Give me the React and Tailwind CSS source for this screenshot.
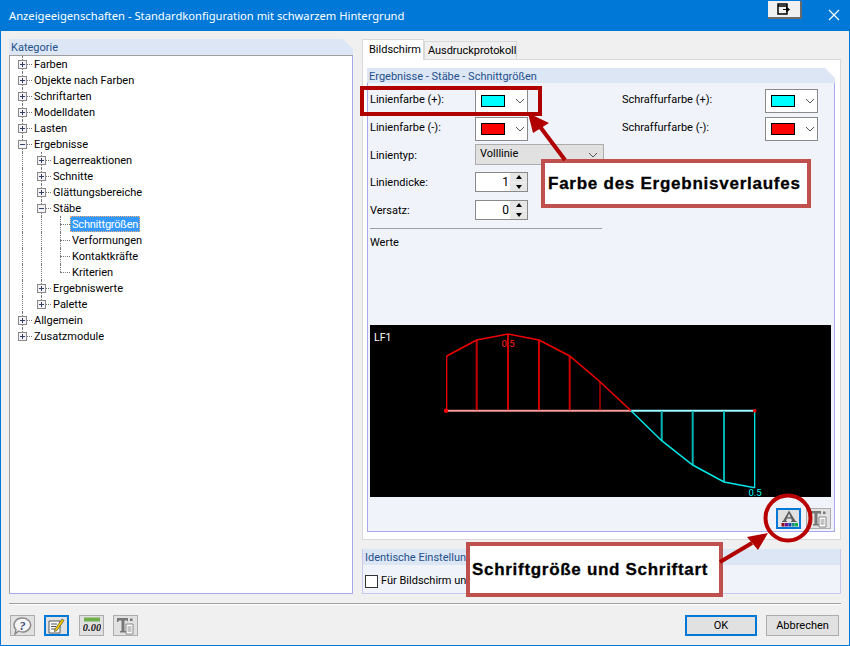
import React from "react";

const TREE = [
  { label: "Farben", level: 0, kind: "plus" },
  { label: "Objekte nach Farben", level: 0, kind: "plus" },
  { label: "Schriftarten", level: 0, kind: "plus" },
  { label: "Modelldaten", level: 0, kind: "plus" },
  { label: "Lasten", level: 0, kind: "plus" },
  { label: "Ergebnisse", level: 0, kind: "minus" },
  { label: "Lagerreaktionen", level: 1, kind: "plus" },
  { label: "Schnitte", level: 1, kind: "plus" },
  { label: "Glättungsbereiche", level: 1, kind: "plus" },
  { label: "Stäbe", level: 1, kind: "minus" },
  { label: "Schnittgrößen", level: 2, kind: "leaf", selected: true },
  { label: "Verformungen", level: 2, kind: "leaf" },
  { label: "Kontaktkräfte", level: 2, kind: "leaf" },
  { label: "Kriterien", level: 2, kind: "leaf", last: true },
  { label: "Ergebniswerte", level: 1, kind: "plus" },
  { label: "Palette", level: 1, kind: "plus", lastInLevel: true },
  { label: "Allgemein", level: 0, kind: "plus" },
  { label: "Zusatzmodule", level: 0, kind: "plus", lastInLevel: true },
];

function Guide({ half }) {
  return (
    <span
      className={`absolute left-[9px] top-0 w-0 border-l border-dotted border-[#777] ${
        half ? "h-2" : "h-4"
      }`}
    />
  );
}

function TreeRow({ item }) {
  const { level, kind } = item;
  return (
    <div className="flex h-4 items-center text-[11px] leading-4 text-black">
      <div className="relative h-4 w-[19px] shrink-0">
        <Guide half={level === 0 && item.lastInLevel} />
        {level === 0 && <Expander kind={kind} />}
      </div>
      {level >= 1 && (
        <div className="relative h-4 w-[19px] shrink-0">
          <Guide half={level === 1 && item.lastInLevel} />
          {level === 1 && <Expander kind={kind} />}
        </div>
      )}
      {level === 2 && (
        <div className="relative h-4 w-[19px] shrink-0">
          <Guide half={item.last} />
          <span className="absolute left-[9px] top-2 w-[10px] border-t border-dotted border-[#777]" />
        </div>
      )}
      {item.selected ? (
        <span className="h-4 whitespace-nowrap border border-dotted border-[#ffb070] bg-[#3399ff] px-[1px] leading-[15px] tracking-[-0.2px] text-white">
          {item.label}
        </span>
      ) : (
        <span className="pl-[2px] pt-[1px]">{item.label}</span>
      )}
    </div>
  );
}

function Expander({ kind }) {
  return (
    <>
      <span className="absolute left-[14px] top-2 w-[5px] border-t border-dotted border-[#777]" />
      <span className="absolute left-[5px] top-[4px] flex h-[9px] w-[9px] items-center justify-center border border-[#8a8a8a] bg-[#f4f4f4]">
        <span className="absolute h-px w-[5px] bg-[#33406e]" />
        {kind === "plus" && <span className="absolute h-[5px] w-px bg-[#33406e]" />}
      </span>
    </>
  );
}

function ColorCombo({ color }) {
  return (
    <div className="flex h-6 w-[53px] items-center border border-[#8a8a8a] bg-white pl-[5px]">
      <span className={`h-3 w-6 border border-black ${color}`} />
      <svg width="10" height="6" viewBox="0 0 10 6" className="ml-[10px]">
        <path d="M1 1l4 4 4-4" fill="none" stroke="#555" strokeWidth="1" />
      </svg>
    </div>
  );
}

function Spinner({ value }) {
  return (
    <div className="flex h-5 w-[53px] border border-[#8a8a8a] bg-white">
      <span className="flex-1 pr-[1px] text-right text-[12px] leading-[18px]">{value}</span>
      <div className="flex w-[17px] flex-col gap-px bg-[#f0f0f0]">
        <span className="flex flex-1 items-center justify-center bg-[#e6e6e6]">
          <span className="h-0 w-0 border-x-[3px] border-b-[4px] border-x-transparent border-b-black" />
        </span>
        <span className="flex flex-1 items-center justify-center bg-[#e6e6e6]">
          <span className="h-0 w-0 border-x-[3px] border-t-[4px] border-x-transparent border-t-black" />
        </span>
      </div>
    </div>
  );
}

function SectionHeader({ tall, children }) {
  return (
    <div
      className={`bg-[#dce6f4] pl-[2px] pt-[1px] text-[11px] text-[#24508c] [clip-path:polygon(0_0,calc(100%-10px)_0,100%_10px,100%_100%,0_100%)] ${
        tall ? "h-4 leading-4" : "h-[15px] leading-[15px]"
      }`}
    >
      {children}
    </div>
  );
}

function ToolButton({ active, children }) {
  return (
    <button
      className={`flex h-[21px] w-[25px] items-center justify-center bg-[#e1e1e1] ${
        active ? "border-2 border-[#0078d7]" : "border border-[#adadad]"
      }`}
    >
      {children}
    </button>
  );
}

function Diagram() {
  const red = [[76.7, 31], [106.7, 15], [138, 9], [169, 15], [199.7, 31], [230, 56.7], [261, 85.7]];
  const cyan = [[261, 85.7], [291.7, 115.7], [322.7, 140], [354, 157], [384.7, 162.7]];
  return (
    <svg width="461" height="172" viewBox="0 0 461 172" className="block bg-black">
      <text x="4" y="16" fill="#fff" fontSize="10.5" fontFamily="Roboto, sans-serif">LF1</text>
      <line x1="76" y1="85.7" x2="261" y2="85.7" stroke="#ff9a9a" strokeWidth="2" />
      <line x1="261" y1="85.7" x2="385" y2="85.7" stroke="#9affff" strokeWidth="2" />
      {red.slice(1, 5).map(([x, y]) => (
        <line key={x} x1={x} y1={y} x2={x} y2="85" stroke="#cc0000" strokeWidth="2" />
      ))}
      <line x1="230" y1="57" x2="230" y2="85" stroke="#e00000" strokeWidth="1.2" />
      <line x1="76.7" y1="31" x2="76.7" y2="85" stroke="#ff0000" strokeWidth="1.2" />
      {cyan.slice(1, 4).map(([x, y]) => (
        <line key={x} x1={x} y1="86" x2={x} y2={y} stroke="#00b4b4" strokeWidth="2" />
      ))}
      <line x1="384.7" y1="86" x2="384.7" y2="163" stroke="#00ffff" strokeWidth="1.2" />
      <polyline points={red.map((p) => p.join(",")).join(" ")} fill="none" stroke="#f00000" strokeWidth="1.5" />
      <polyline points={cyan.map((p) => p.join(",")).join(" ")} fill="none" stroke="#00e6e6" strokeWidth="1.5" />
      <circle cx="76" cy="85.7" r="2.2" fill="#ff0000" />
      <circle cx="384.7" cy="85.7" r="1.8" fill="#ff0000" />
      <text x="138" y="22" textAnchor="middle" fill="#ff2020" fontSize="9.5" fontFamily="Roboto, sans-serif">0.5</text>
      <text x="385" y="171" textAnchor="middle" fill="#00ffff" fontSize="9.5" fontFamily="Roboto, sans-serif">0.5</text>
    </svg>
  );
}

function FontColorIcon() {
  return (
    <svg width="20" height="17" viewBox="0 0 20 17">
      <path d="M10 0.5L4 11H3v1h5v-1H7l.8-2.4h4.4L13 11h-1v1h5.5v-1h-1L10 0.5zM8.4 7.2L10 3.6l1.6 3.6H8.4z" fill="#5f5f5f" />
      <rect x="2.5" y="13" width="3" height="3.5" fill="#8a1020" />
      <rect x="5.9" y="13" width="3" height="3.5" fill="#6a10a0" />
      <rect x="9.3" y="13" width="3" height="3.5" fill="#2040b0" />
      <rect x="12.7" y="13" width="3" height="3.5" fill="#109080" />
      <rect x="16" y="13" width="3" height="3.5" fill="#10b050" />
    </svg>
  );
}

function FontDocIcon() {
  return (
    <svg width="20" height="18" viewBox="0 0 20 18">
      <path d="M1 1h11v4l-1-1.5H8.5V14H10v1.5H4V14h1.5V3.5H3L2 5H1z" fill="#777" />
      <path d="M10 7h7v10h-7z" fill="#fff" stroke="#888" />
      <path d="M11.5 10h4M11.5 12h4M11.5 14h4" stroke="#888" />
      <rect x="14" y="1.5" width="2.5" height="2.5" fill="#777" />
    </svg>
  );
}

function Annotations() {
  return (
    <svg width="850" height="646" viewBox="0 0 850 646" className="pointer-events-none absolute -left-px -top-px">
      <line x1="565" y1="160" x2="538" y2="124" stroke="#b00000" strokeWidth="4" />
      <polygon points="528,113 549,123 533,133" fill="#b00000" />
      <line x1="720" y1="562" x2="752" y2="543" stroke="#b00000" strokeWidth="4" />
      <polygon points="768,533 747,537 758,550" fill="#b00000" />
      <circle cx="788" cy="518" r="22.5" fill="none" stroke="#b80000" strokeWidth="4" />
    </svg>
  );
}

export default function App() {
  return (
    <div className="relative flex h-[646px] w-[850px] flex-col overflow-hidden border border-[#0078d7] bg-[#f0f0f0] font-['Roboto',sans-serif] text-[11px] text-black">
      <div className="flex h-[30px] shrink-0 items-start bg-[#0078d7] pl-2 text-white">
        <span className="pt-[7px] font-['Noto_Sans',sans-serif] text-[11.2px] leading-4">
          Anzeigeeigenschaften - Standardkonfiguration mit schwarzem Hintergrund
        </span>
        <button className="ml-auto flex h-[18px] w-[34px] items-center justify-center border-b-2 border-r-2 border-[#6a6a6a] bg-[#f0f0f0]">
          <svg width="14" height="12" viewBox="0 0 14 12">
            <path d="M1 1h9v10H1zM1 3h9" fill="none" stroke="#000" strokeWidth="1.5" />
            <path d="M6 6.5h5M9.5 4.5l3 2-3 2z" stroke="#000" fill="#000" strokeWidth="1" />
          </svg>
        </button>
        <div className="ml-[26px] mr-[9px] pt-2">
          <svg width="12" height="12" viewBox="0 0 12 12">
            <path d="M1 1l10 10M11 1L1 11" stroke="#fff" strokeWidth="1.2" />
          </svg>
        </div>
      </div>

      <div className="flex h-[563px] shrink-0 gap-[9px] pl-2 pt-2">
        <div className="flex h-[555px] w-[344px] flex-col">
          <SectionHeader tall>Kategorie</SectionHeader>
          <div className="flex-1 border border-b-[#a8a8f0] border-l-[#a0a0a0] border-r-[#a8a8f0] border-t-[#a0a0a0] bg-white pl-[3px]">
            {TREE.map((item) => (
              <TreeRow key={item.label} item={item} />
            ))}
          </div>
        </div>

        <div className="flex h-[555px] w-[479px] flex-col">
          <div className="flex h-5 items-end">
            <div className="relative z-10 -mb-px h-[21px] w-[62px] border border-b-0 border-[#d9d9d9] bg-white pl-[6px] pt-[2px] leading-4">
              Bildschirm
            </div>
            <div className="h-[18px] w-[93px] border border-b-0 border-[#d9d9d9] bg-[#f0f0f0] pl-[3px] pt-[1px] leading-4 tracking-[-0.05px]">
              Ausdruckprotokoll
            </div>
          </div>
          <div className="h-[481px] border border-[#d9d9d9] bg-white px-1 pb-[7px] pt-2">
            <div className="flex h-[464px] w-[468px] flex-col">
              <SectionHeader>Ergebnisse - Stäbe - Schnittgrößen</SectionHeader>
              <div className="flex flex-1 flex-col border-b border-l border-r border-[#a8a8f0] bg-[#f0f3f9] pl-[2px]">
                <div className="flex pt-[6px]">
                  <div className="w-[234px]">
                    <div className="flex h-6 items-start">
                      <span className="w-[105px] pt-[3px]">Linienfarbe (+):</span>
                      <ColorCombo color="bg-[#00ffff]" />
                    </div>
                    <div className="mt-1 flex h-6 items-start">
                      <span className="w-[105px] pt-[3px]">Linienfarbe (-):</span>
                      <ColorCombo color="bg-[#ff0000]" />
                    </div>
                    <div className="mt-[3px] flex h-[21px] items-center">
                      <span className="w-[105px] pt-[3px]">Linientyp:</span>
                      <div className="flex h-[21px] w-[129px] items-center justify-between border border-[#adadad] bg-[#e1e1e1] pl-1 pr-[5px]">
                        <span>Volllinie</span>
                        <svg width="10" height="6" viewBox="0 0 10 6">
                          <path d="M1 1l4 4 4-4" fill="none" stroke="#555" />
                        </svg>
                      </div>
                    </div>
                    <div className="mt-[7px] flex h-5 items-center">
                      <span className="w-[105px] pt-[2px]">Liniendicke:</span>
                      <Spinner value="1" />
                    </div>
                    <div className="mt-2 flex h-5 items-center">
                      <span className="w-[105px] pt-[2px]">Versatz:</span>
                      <Spinner value="0" />
                    </div>
                  </div>
                  <div className="ml-[18px] w-[196px]">
                    <div className="flex h-6 items-start justify-between">
                      <span className="pt-[3px]">Schraffurfarbe (+):</span>
                      <ColorCombo color="bg-[#00ffff]" />
                    </div>
                    <div className="mt-1 flex h-6 items-start justify-between">
                      <span className="pt-[3px]">Schraffurfarbe (-):</span>
                      <ColorCombo color="bg-[#ff0000]" />
                    </div>
                  </div>
                </div>
                <div className="mt-2 h-px w-[232px] bg-[#a0a0a0]" />
                <div className="mt-[6px] h-[90px] leading-4">Werte</div>
                <Diagram />
                <div className="mr-[3px] mt-[11px] flex justify-end gap-[5px]">
                  <ToolButton active>
                    <FontColorIcon />
                  </ToolButton>
                  <ToolButton>
                    <FontDocIcon />
                  </ToolButton>
                </div>
              </div>
            </div>
          </div>
          <div className="mt-[9px] flex h-[45px] flex-col border-b border-l border-r border-[#c8c8f0] bg-[#f0f3f9]">
            <div className="h-4 bg-[#dce6f4] pl-[2px] pt-[1px] leading-[15px] text-[#24508c]">
              Identische Einstellung
            </div>
            <label className="mt-2 flex items-center gap-[3px] pl-[2px]">
              <span className="h-[13px] w-[13px] border border-[#333] bg-white" />
              Für Bildschirm und
            </label>
          </div>
        </div>
      </div>

      <div className="mx-2 mt-[9px] h-[2px] border-b border-t-0 border-white bg-[#a0a0a0]" />

      <div className="flex flex-1 gap-[9px] pl-[9px] pt-[10px]">
        <ToolButton>
          <svg width="19" height="18" viewBox="0 0 19 18">
            <path d="M9.5 1a8 7 0 1 1-4 13L2 17l1-4.500A8 7 0 0 1 9.500 1z" fill="#f4f4f4" stroke="#888" strokeWidth="1.4" />
            <text x="9.500" y="12.500" textAnchor="middle" fontSize="12" fontWeight="700" fontStyle="italic" fill="#39457a" fontFamily="Liberation Serif, serif">?</text>
          </svg>
        </ToolButton>
        <ToolButton active>
          <svg width="17" height="17" viewBox="0 0 17 17">
            <path d="M1 4h11v12H1z" fill="#fff" stroke="#555" />
            <path d="M3 7h6M3 9.500h5M3 12h4" stroke="#555" />
            <path d="M7 12l7-10 2 1.500-7 10-2.500 1z" fill="#f5c800" stroke="#333" strokeWidth="0.6" />
          </svg>
        </ToolButton>
        <div className="ml-px">
          <ToolButton>
            <svg width="18" height="17" viewBox="0 0 18 17">
              <rect x="1" y="0.500" width="16" height="4" fill="#6fb04a" />
              <text x="9" y="14" textAnchor="middle" fontSize="10.500" fontWeight="700" fontStyle="italic" fill="#222" fontFamily="Liberation Serif, serif">0.00</text>
            </svg>
          </ToolButton>
        </div>
        <ToolButton>
          <FontDocIcon />
        </ToolButton>

        <button className="ml-[538px] h-[21px] w-[72px] border-2 border-[#0078d7] bg-[#e1e1e1] leading-4">OK</button>
        <button className="h-[21px] w-[73px] border border-[#adadad] bg-[#e1e1e1] leading-4">Abbrechen</button>
      </div>

      {/* callouts drawn over the dialog */}
      <div className="absolute left-[359px] top-[85px] h-[30px] w-[182px] border-4 border-[#b00000]" />
      <div className="absolute left-[540px] top-[158px] flex h-[49px] w-[270px] items-center border-4 border-[#c0504d] bg-white pl-[3px] font-['Liberation_Sans',sans-serif] text-[17px] font-bold tracking-[0.75px] text-black [-webkit-text-stroke:0.3px_#000]">
        Farbe des Ergebnisverlaufes
      </div>
      <div className="absolute left-[465px] top-[541px] flex h-[55px] w-[257px] items-center border-4 border-[#c0504d] bg-white pl-[2px] font-['Liberation_Sans',sans-serif] text-[17px] font-bold tracking-[0.7px] text-black [-webkit-text-stroke:0.3px_#000]">
        Schriftgröße und Schriftart
      </div>
      <Annotations />
    </div>
  );
}
